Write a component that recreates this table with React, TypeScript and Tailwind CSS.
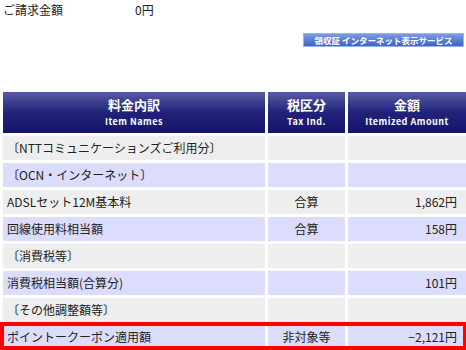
import React from 'react';

const font = { fontFamily: '"Noto Sans CJK JP", "Noto Sans", sans-serif' };

type Row = { name: string; tax?: string; amount?: string; alt: boolean };

const rows: Row[] = [
  { name: '〔NTTコミュニケーションズご利用分〕', alt: false },
  { name: '〔OCN・インターネット〕', alt: true },
  { name: 'ADSLセット12M基本料', tax: '合算', amount: '1,862円', alt: false },
  { name: '回線使用料相当額', tax: '合算', amount: '158円', alt: true },
  { name: '〔消費税等〕', alt: false },
  { name: '消費税相当額(合算分)', amount: '101円', alt: true },
  { name: '〔その他調整額等〕', alt: false },
];

const RowCells: React.FC<{ row: Row }> = ({ row }) => {
  const bg = row.alt ? 'bg-[#dcdcfc]' : 'bg-[#eeeeee]';
  return (
    <>
      <div className={`${bg} h-[24px] flex items-center pl-[4px] text-[12px] text-[#222] whitespace-nowrap`}>{row.name}</div>
      <div className={`${bg} h-[24px] flex items-center justify-center text-[12px] text-[#222]`}>{row.tax}</div>
      <div className={`${bg} h-[24px] flex items-center justify-end pr-[9px] text-[12px] text-[#222]`}>{row.amount}</div>
    </>
  );
};

const HeaderCell: React.FC<{ jp: string; en: string }> = ({ jp, en }) => (
  <div className="h-[41px] flex flex-col items-center justify-center bg-gradient-to-b from-[#5a5aa2] via-[#22227a] to-[#14146a] text-white">
    <span className="text-[13px] font-bold leading-[16px]">{jp}</span>
    <span className="text-[9px] font-bold leading-[12px] mt-[3px] tracking-[0.5px]">{en}</span>
  </div>
);

export default function App() {
  return (
    <div className="w-[466px] h-[350px] bg-white overflow-hidden" style={font}>
      {/* 請求金額 */}
      <div className="flex items-center h-[20px] pl-[3px] text-[12px] text-[#222]">
        <span className="w-[132px]">ご請求金額</span>
        <span>0円</span>
      </div>

      <div className="flex justify-end pr-[2px] mt-[13px]">
        <button className="w-[161px] h-[14px] flex items-center justify-center bg-gradient-to-b from-[#7d9ce0] to-[#3a63c6] border border-[#9fb4e6] text-white text-[8.5px] font-bold leading-none whitespace-nowrap">
          領収証 インターネット表示サービス
        </button>
      </div>

      {/* 明細テーブル */}
      <div className="mt-[45px] ml-[3px] grid grid-cols-[262px_77px_118px] gap-x-[3px] gap-y-[3px]">
        <HeaderCell jp="料金内訳" en="Item Names" />
        <HeaderCell jp="税区分" en="Tax Ind." />
        <HeaderCell jp="金額" en="Itemized Amount" />
        {rows.map((r, i) => (
          <RowCells key={i} row={r} />
        ))}
      </div>

      <div className="relative mt-[3px] ml-[3px] grid grid-cols-[262px_77px_118px] gap-x-[3px]">
        <RowCells row={{ name: 'ポイントークーポン適用額', tax: '非対象等', amount: '−2,121円', alt: true }} />
        <div className="absolute left-[-3px] right-[-1px] top-[-3px] bottom-[-1px] border-4 border-[#ff0000]" />
      </div>
    </div>
  );
}
